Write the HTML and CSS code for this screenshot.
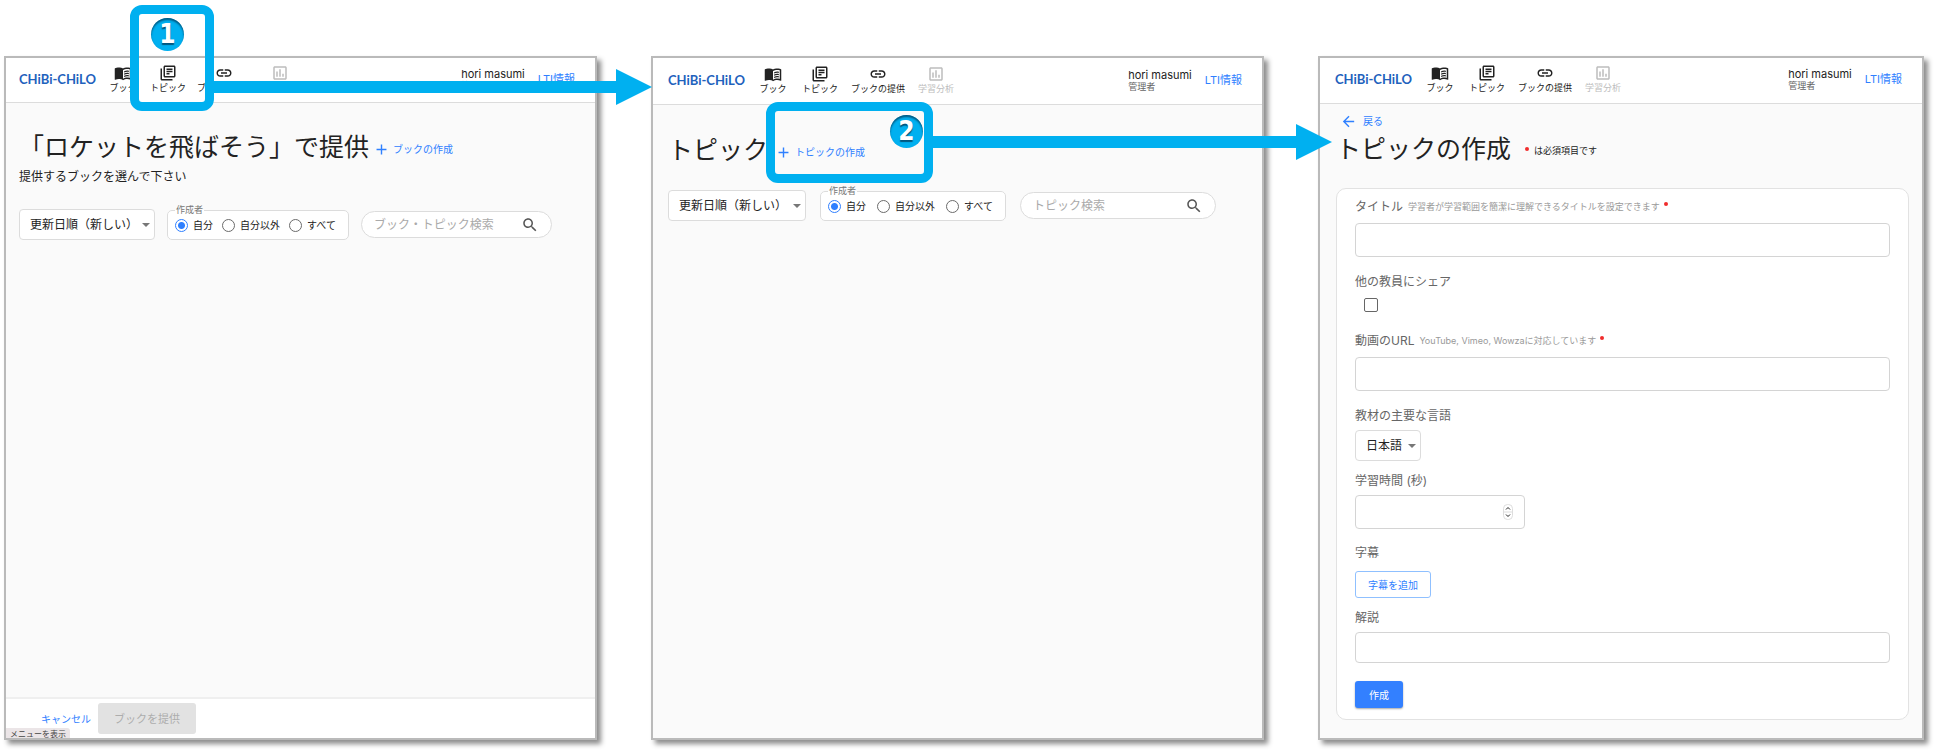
FILE: index.html
```html
<!DOCTYPE html>
<html lang="ja">
<head>
<meta charset="utf-8">
<title>CHiBi-CHiLO トピックの作成手順</title>
<link rel="stylesheet" href="styles.css">
</head>
<body>
<svg class="symbols" aria-hidden="true">
  <symbol id="i-book" viewBox="0 0 24 24"><path d="M21 5c-1.1-.35-2.3-.5-3.500-.5-1.950 0-4.050.4-5.500 1.500-1.450-1.100-3.550-1.500-5.500-1.500S2.450 4.900 1 6v14.650c0 .250.250.500.500.500.100 0 .150-.050.250-.050C3.100 20.450 5.050 20 6.500 20c1.950 0 4.050.400 5.500 1.500 1.350-.850 3.800-1.500 5.500-1.500 1.650 0 3.350.300 4.750 1.050.100.050.150.050.250.050.250 0 .500-.250.500-.500V6c-.600-.450-1.250-.750-2-1zm0 13.500c-1.100-.350-2.300-.500-3.500-.500-1.700 0-4.150.650-5.500 1.500V8c1.350-.850 3.800-1.500 5.500-1.500 1.200 0 2.400.150 3.500.500v11.500z"/><path d="M13.500 9.700c2.200-1 4-1.100 6.300-.7v1.500c-2.300-.4-4.100-.3-6.300.7zm0 3c2.200-1 4-1.100 6.300-.7v1.500c-2.300-.4-4.100-.3-6.300.7zm0 3c2.200-1 4-1.100 6.300-.7v1.500c-2.300-.4-4.100-.3-6.300.7z"/></symbol>
  <symbol id="i-topic" viewBox="0 0 24 24"><path d="M4 6H2v14c0 1.100.900 2 2 2h14v-2H4V6zm16-4H8c-1.100 0-2 .900-2 2v12c0 1.100.900 2 2 2h12c1.100 0 2-.900 2-2V4c0-1.100-.900-2-2-2zm0 14H8V4h12v12zM10 9h8v2h-8zm0 3h4v2h-4zm0-6h8v2h-8z"/></symbol>
  <symbol id="i-link" viewBox="0 0 24 24"><path d="M3.900 12c0-1.710 1.390-3.100 3.100-3.100h4V7H7c-2.760 0-5 2.240-5 5s2.240 5 5 5h4v-1.900H7c-1.710 0-3.100-1.390-3.100-3.100zM8 13h8v-2H8v2zm9-6h-4v1.900h4c1.710 0 3.100 1.390 3.100 3.100s-1.390 3.100-3.100 3.100h-4V17h4c2.760 0 5-2.240 5-5s-2.240-5-5-5z"/></symbol>
  <symbol id="i-chart" viewBox="0 0 24 24"><path d="M19 3H5c-1.100 0-2 .900-2 2v14c0 1.100.900 2 2 2h14c1.100 0 2-.900 2-2V5c0-1.100-.900-2-2-2zm0 16H5V5h14v14zM7 10h2v7H7zm4-3h2v10h-2zm4 6h2v4h-2z"/></symbol>
  <symbol id="i-add" viewBox="0 0 24 24"><path d="M19 13h-6v6h-2v-6H5v-2h6V5h2v6h6v2z"/></symbol>
  <symbol id="i-back" viewBox="0 0 24 24"><path d="M20 11H7.830l5.590-5.590L12 4l-8 8 8 8 1.410-1.410L7.830 13H20v-2z"/></symbol>
  <symbol id="i-search" viewBox="0 0 24 24"><path d="M15.500 14h-.790l-.280-.270C15.410 12.590 16 11.110 16 9.500 16 5.910 13.090 3 9.500 3S3 5.910 3 9.500 5.910 16 9.500 16c1.610 0 3.090-.590 4.230-1.570l.270.280v.790l5 4.990L20.490 19l-4.990-5zm-6 0C7.010 14 5 11.990 5 9.500S7.010 5 9.500 5 14 7.010 14 9.500 11.990 14 9.500 14z"/></symbol>
</svg>

<main class="steps">
  <section class="screen screen-provide">
    <header class="appbar">
      <a class="logo" href="#">CHiBi-CHiLO</a>
      <nav class="nav">
        <a class="nav-item" href="#"><svg class="nav-icon"><use href="#i-book"/></svg>ブック</a>
        <a class="nav-item" href="#"><svg class="nav-icon"><use href="#i-topic"/></svg>トピック</a>
        <a class="nav-item" href="#"><svg class="nav-icon"><use href="#i-link"/></svg>ブックの提供</a>
        <a class="nav-item disabled" href="#"><svg class="nav-icon"><use href="#i-chart"/></svg>学習分析</a>
      </nav>
      <div class="user"><span class="user-name">hori masumi</span><span class="user-role">管理者</span></div>
      <a class="lti" href="#">LTI情報</a>
    </header>
    <div class="content">
      <div class="title-row">
        <h1 class="title">「ロケットを飛ばそう」で提供</h1>
        <button class="text-button" type="button"><svg class="small-icon"><use href="#i-add"/></svg>ブックの作成</button>
      </div>
      <p class="subtitle">提供するブックを選んで下さい</p>
      <form class="toolbar">
        <span class="select-wrap"><select class="select" aria-label="並び順"><option>更新日順（新しい）</option></select></span>
        <fieldset class="authors">
          <legend class="legend">作成者</legend>
          <div class="radios">
            <label class="radio-label"><input class="radio" type="radio" name="author1" checked>自分</label>
            <label class="radio-label"><input class="radio" type="radio" name="author1">自分以外</label>
            <label class="radio-label"><input class="radio" type="radio" name="author1">すべて</label>
          </div>
        </fieldset>
        <div class="search">
          <input class="search-input" type="text" aria-label="ブック・トピック検索" placeholder="ブック・トピック検索">
          <button class="search-button" type="button" aria-label="検索"><svg class="search-icon"><use href="#i-search"/></svg></button>
        </div>
      </form>
    </div>
    <footer class="actions">
      <button class="text-button" type="button">キャンセル</button>
      <button class="provide-button" type="button" disabled>ブックを提供</button>
      <span class="status-tip">メニューを表示</span>
    </footer>
  </section>

  <section class="screen screen-topics">
    <header class="appbar">
      <a class="logo" href="#">CHiBi-CHiLO</a>
      <nav class="nav">
        <a class="nav-item" href="#"><svg class="nav-icon"><use href="#i-book"/></svg>ブック</a>
        <a class="nav-item" href="#"><svg class="nav-icon"><use href="#i-topic"/></svg>トピック</a>
        <a class="nav-item" href="#"><svg class="nav-icon"><use href="#i-link"/></svg>ブックの提供</a>
        <a class="nav-item disabled" href="#"><svg class="nav-icon"><use href="#i-chart"/></svg>学習分析</a>
      </nav>
      <div class="user"><span class="user-name">hori masumi</span><span class="user-role">管理者</span></div>
      <a class="lti" href="#">LTI情報</a>
    </header>
    <div class="content">
      <div class="title-row">
        <h1 class="title">トピック</h1>
        <button class="text-button" type="button"><svg class="small-icon"><use href="#i-add"/></svg>トピックの作成</button>
      </div>
      <form class="toolbar">
        <span class="select-wrap"><select class="select" aria-label="並び順"><option>更新日順（新しい）</option></select></span>
        <fieldset class="authors">
          <legend class="legend">作成者</legend>
          <div class="radios">
            <label class="radio-label"><input class="radio" type="radio" name="author2" checked>自分</label>
            <label class="radio-label"><input class="radio" type="radio" name="author2">自分以外</label>
            <label class="radio-label"><input class="radio" type="radio" name="author2">すべて</label>
          </div>
        </fieldset>
        <div class="search">
          <input class="search-input" type="text" aria-label="トピック検索" placeholder="トピック検索">
          <button class="search-button" type="button" aria-label="検索"><svg class="search-icon"><use href="#i-search"/></svg></button>
        </div>
      </form>
    </div>
  </section>

  <section class="screen screen-create">
    <header class="appbar">
      <a class="logo" href="#">CHiBi-CHiLO</a>
      <nav class="nav">
        <a class="nav-item" href="#"><svg class="nav-icon"><use href="#i-book"/></svg>ブック</a>
        <a class="nav-item" href="#"><svg class="nav-icon"><use href="#i-topic"/></svg>トピック</a>
        <a class="nav-item" href="#"><svg class="nav-icon"><use href="#i-link"/></svg>ブックの提供</a>
        <a class="nav-item disabled" href="#"><svg class="nav-icon"><use href="#i-chart"/></svg>学習分析</a>
      </nav>
      <div class="user"><span class="user-name">hori masumi</span><span class="user-role">管理者</span></div>
      <a class="lti" href="#">LTI情報</a>
    </header>
    <div class="content">
      <button class="text-button back" type="button"><svg class="small-icon"><use href="#i-back"/></svg>戻る</button>
      <div class="title-row">
        <h1 class="title">トピックの作成</h1>
        <span class="required-note"><span class="required"></span>は必須項目です</span>
      </div>
      <form class="card">
        <div class="field">
          <label class="label" for="f-title">タイトル<span class="hint">学習者が学習範囲を簡潔に理解できるタイトルを設定できます</span><span class="required"></span></label>
          <input class="input" id="f-title" type="text">
        </div>
        <div class="field">
          <label class="label" for="f-share">他の教員にシェア</label>
          <input class="checkbox" id="f-share" type="checkbox">
        </div>
        <div class="field spaced">
          <label class="label" for="f-url">動画のURL<span class="hint">YouTube, Vimeo, Wowzaに対応しています</span><span class="required"></span></label>
          <input class="input" id="f-url" type="text">
        </div>
        <div class="field tight">
          <label class="label" for="f-lang">教材の主要な言語</label>
          <span class="select-wrap"><select class="select" id="f-lang"><option>日本語</option></select></span>
        </div>
        <div class="field snug">
          <label class="label" for="f-time">学習時間 (秒)</label>
          <div class="number">
            <input class="input" id="f-time" type="text" inputmode="numeric">
            <svg class="stepper" viewBox="0 0 10 16" aria-hidden="true"><rect class="stepper-box" x=".5" y=".5" width="9" height="15" rx="4"/><path class="stepper-line" d="M1 8h8"/><path class="stepper-arrow" d="M3 5.500l2-2 2 2M3 10.500l2 2 2-2"/></svg>
          </div>
        </div>
        <div class="field tight">
          <span class="label">字幕</span>
          <button class="outline-button" type="button">字幕を追加</button>
        </div>
        <div class="field snug">
          <label class="label" for="f-desc">解説</label>
          <input class="input input-short" id="f-desc" type="text">
        </div>
        <button class="submit" type="button">作成</button>
      </form>
    </div>
  </section>
</main>

<div class="callouts">
  <div class="frame frame-nav"></div>
  <div class="frame frame-create"></div>
  <svg class="arrow arrow-first" viewBox="0 0 440 36" aria-hidden="true"><path d="M0 12h404V0l36 18-36 18V24H0z"/></svg>
  <svg class="arrow arrow-second" viewBox="0 0 402 36" aria-hidden="true"><path d="M0 12h366V0l36 18-36 18V24H0z"/></svg>
  <span class="badge badge-one">1</span>
  <span class="badge badge-two">2</span>
</div>
</body>
</html>
```

FILE: styles.css
```css
:root {
  --blue: #2f80ff;
  --cyan: #00b0f0;
  --line: #dcdcdc;
}

* { box-sizing: border-box; }

body {
  margin: 0;
  background: #fff;
  color: #222;
  font: 12px/18px Inter, "Noto Sans CJK JP", sans-serif;
}

button, input, select { font: inherit; color: inherit; margin: 0; }
a { color: inherit; text-decoration: none; }
.symbols { position: absolute; width: 0; height: 0; }
svg { fill: currentColor; }

.steps {
  display: grid;
  grid-template-columns: 593fr 613fr 606fr;
  gap: 54px;
  min-height: 100vh;
  padding: 56px 12px 12px 4px;
}

.screen {
  display: flex;
  flex-direction: column;
  min-width: 0;
  border: 2px solid #bababa;
  background: #fafafa;
  box-shadow: 4px 4px 5px rgba(0, 0, 0, .45);
}

/* App bar */
.appbar {
  display: flex;
  align-items: center;
  height: 46px;
  padding: 0 20px 3px 15px;
  background: #fff;
  border-bottom: 1px solid var(--line);
}
.logo { color: #1f62bd; font: 700 13px/18px Lato, sans-serif; }
.nav { display: flex; gap: 13px; margin-left: 12px; }
.nav-item {
  display: flex;
  flex-direction: column;
  align-items: center;
  min-width: 32px;
  font-size: 9px;
  line-height: 12px;
  white-space: nowrap;
}
.nav-icon { width: 18px; height: 18px; }
.disabled { color: #bdbdbd; }
.user { display: flex; flex-direction: column; margin-left: auto; }
.user-name { font-size: 11px; line-height: 14px; }
.user-role { color: #666; font-size: 9px; line-height: 10px; }
.lti { margin-left: 13px; color: var(--blue); font-size: 11px; }

/* Page heading */
.content { flex: 1; padding: 27px 46px 16px 15px; }
.title-row { display: flex; align-items: center; }
.title { margin: 0; font-size: 25px; font-weight: 400; line-height: 36px; white-space: nowrap; }
.subtitle { margin: 3px 0 0; }
.text-button {
  display: flex;
  align-items: center;
  gap: 3px;
  padding: 0;
  border: 0;
  background: none;
  color: var(--blue);
  font-size: 10px;
}
.small-icon { width: 17px; height: 17px; }
.title-row .text-button { margin: 4px 0 0 4px; }

/* Toolbar */
.toolbar { display: flex; align-items: flex-end; gap: 14px; margin-top: 18px; }
.select-wrap { position: relative; display: inline-flex; flex: none; }
.select-wrap::after {
  content: "";
  position: absolute;
  right: 5px;
  top: 14px;
  border: 4px solid transparent;
  border-top-color: #777;
  border-bottom: 0;
  pointer-events: none;
}
.select {
  height: 31px;
  padding: 0 17px 0 10px;
  border: 1px solid var(--line);
  border-radius: 4px;
  background: #fff;
  appearance: none;
}
.authors {
  flex: none;
  margin: 0;
  padding: 0 12px 4px 7px;
  border: 1px solid var(--line);
  border-radius: 5px;
  background: #fff;
}
.legend { padding: 0 1px; color: #777; font-size: 9px; line-height: 10px; }
.radios { display: flex; align-items: center; gap: 11px; height: 20px; }
.radio-label { display: flex; align-items: center; gap: 5px; font-size: 10px; white-space: nowrap; }
.radio {
  width: 13px;
  height: 13px;
  border: 1px solid #6b6b6b;
  border-radius: 50%;
  appearance: none;
}
.radio:checked {
  border: 1px solid var(--blue);
  background: radial-gradient(circle, var(--blue) 3px, #fff 4px);
}
.search {
  display: flex;
  flex: 1;
  align-items: center;
  min-width: 0;
  height: 27px;
  margin-bottom: 2px;
  padding: 0 12px 0 12px;
  border: 1px solid var(--line);
  border-radius: 14px;
  background: #fff;
}
.search-input { flex: 1; min-width: 0; padding: 0; border: 0; outline: 0; background: none; }
.search-input::placeholder { color: #aaa; opacity: 1; }
.search-button { display: flex; padding: 0; border: 0; background: none; color: #555; }
.search-icon { width: 18px; height: 18px; }

/* First screen */
.screen-provide .appbar { height: 45px; padding-left: 13px; }
.screen-provide .nav { gap: 11px; margin-left: 11px; }
.screen-provide .content { padding: 26px 43px 18px 13px; }
.screen-provide .toolbar { gap: 12px; margin-top: 19px; }
.screen-provide .select { padding: 0 15px 0 10px; }
.screen-provide .radios { gap: 9px; }
.actions {
  position: relative;
  display: flex;
  align-items: center;
  gap: 7px;
  height: 41px;
  padding: 0 35px;
  overflow: hidden;
  background: #fff;
  border-top: 2px solid #efefef;
}
.provide-button {
  height: 31px;
  padding: 0 16px;
  border: 0;
  border-radius: 3px;
  background: #e2e2e2;
  color: #adadad;
  font-size: 11px;
}
.status-tip {
  position: absolute;
  left: 0;
  bottom: -2px;
  padding: 0 4px;
  border-radius: 0 3px 0 0;
  background: #ebe5e7;
  color: #444;
  font-size: 8px;
  line-height: 12px;
}

/* Second screen */
.screen-topics .appbar { height: 47px; }
.screen-topics .title-row .text-button { margin-left: 7px; }

/* Third screen */
.screen-create .content { padding: 8px 13px 16px 16px; }
.back { gap: 6px; margin: 0 0 1px 4px; }
.required-note { display: flex; align-items: center; gap: 5px; margin: 4px 0 0 14px; font-size: 9px; }
.required { width: 4px; height: 4px; margin-bottom: 5px; border-radius: 50%; background: #f02c2c; }
.card {
  margin-top: 21px;
  padding: 8px 18px 11px;
  border: 1px solid #e2e2e2;
  border-radius: 10px;
  background: #fff;
}
.field { display: flex; flex-direction: column; gap: 7px; margin-bottom: 16px; }
.label { display: flex; align-items: center; color: #666; }
.hint { margin: 1px 4px 0 5px; color: #999; font-size: 9px; }
.input {
  width: 100%;
  height: 34px;
  padding: 0 12px;
  border: 1px solid #d4d4d4;
  border-radius: 4px;
  background: #fff;
}
.input-short { height: 31px; }
.checkbox {
  width: 14px;
  height: 14px;
  margin-left: 9px;
  border: 1px solid #666;
  border-radius: 2px;
  appearance: none;
}
.spaced { margin-top: 19px; }
.tight { gap: 5px; margin-bottom: 11px; }
.snug { gap: 5px; margin-bottom: 15px; }
.field .select-wrap { align-self: flex-start; }
.number { display: flex; position: relative; width: 170px; }
.stepper { position: absolute; right: 12px; top: 9px; width: 10px; height: 16px; fill: none; }
.stepper-box { fill: #fff; stroke: #ddd; }
.stepper-line { stroke: #ddd; }
.stepper-arrow { stroke: #222; }
.outline-button {
  align-self: flex-start;
  height: 27px;
  margin-top: 4px;
  padding: 0 12px;
  border: 1px solid #8fc0ff;
  border-radius: 3px;
  background: #fff;
  color: var(--blue);
  font-size: 10px;
}
.submit {
  display: block;
  height: 27px;
  margin-top: 18px;
  padding: 0 14px;
  border: 0;
  border-radius: 3px;
  background: #3380ff;
  box-shadow: 0 1px 2px rgba(0, 0, 0, .35);
  color: #fff;
  font-size: 10px;
}

/* Callouts drawn over the screens */
.callouts { position: absolute; left: 0; top: 0; color: var(--cyan); pointer-events: none; }
.frame { position: absolute; border: 9px solid var(--cyan); border-radius: 12px; }
.frame-nav { left: 130px; top: 5px; width: 84px; height: 106px; }
.frame-create { left: 766px; top: 102px; width: 167px; height: 81px; }
.arrow { position: absolute; height: 36px; }
.arrow-first { left: 212px; top: 69px; width: 440px; }
.arrow-second { left: 930px; top: 124px; width: 402px; }
.badge {
  position: absolute;
  width: 33px;
  height: 33px;
  border-radius: 50%;
  background: var(--cyan);
  box-shadow: inset 0 2px 2px rgba(0, 50, 80, .7);
  color: #fff;
  font: 700 26px/33px "DejaVu Sans Condensed", "DejaVu Sans", sans-serif;
  text-align: center;
  text-shadow: 0 2px 1px rgba(0, 50, 80, .7);
}
.badge-one { left: 151px; top: 18px; }
.badge-two { left: 890px; top: 115px; }
```
